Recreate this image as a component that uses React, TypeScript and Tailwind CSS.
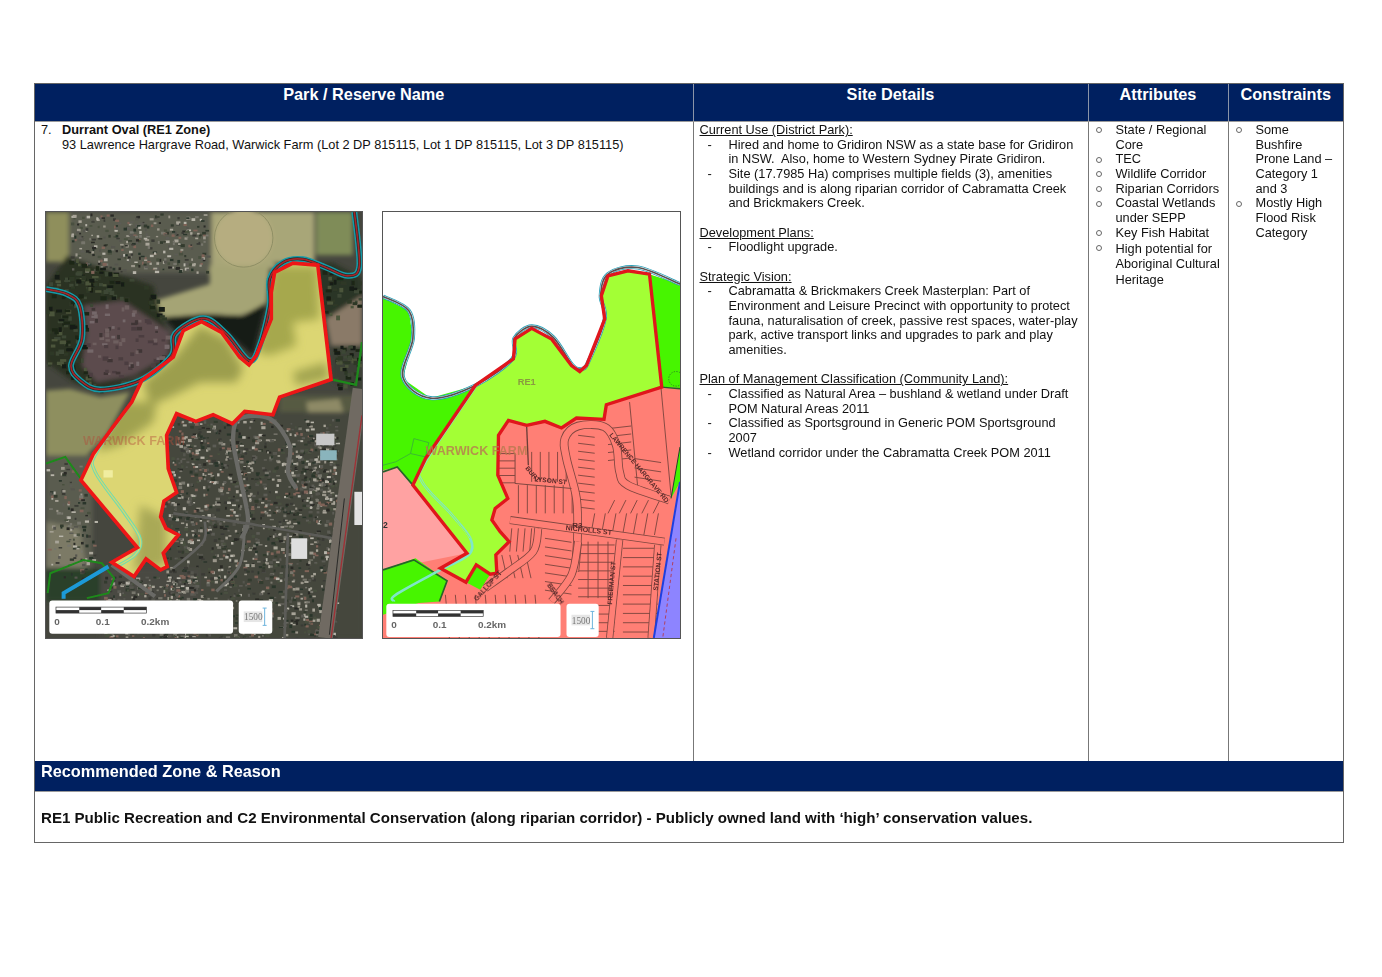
import React from "react";

type P = [number, number];
const NAVY = "bg-[#002060]";

function rng(seed: number) {
  let a = seed;
  return () => {
    a = (a + 0x6d2b79f5) | 0;
    let t = Math.imul(a ^ (a >>> 15), 1 | a);
    t = (t + Math.imul(t ^ (t >>> 7), 61 | t)) ^ t;
    return ((t ^ (t >>> 14)) >>> 0) / 4294967296;
  };
}
const pts = (p: P[]) => p.map((q) => q.join(",")).join(" ");
function smooth(p: P[]) {
  let d = `M${p[0][0]} ${p[0][1]}`;
  for (let i = 0; i < p.length - 1; i++) {
    const a = p[Math.max(i - 1, 0)], b = p[i], c = p[i + 1], e = p[Math.min(i + 2, p.length - 1)];
    d += ` C${b[0] + (c[0] - a[0]) / 6} ${b[1] + (c[1] - a[1]) / 6} ${c[0] - (e[0] - b[0]) / 6} ${c[1] - (e[1] - b[1]) / 6} ${c[0]} ${c[1]}`;
  }
  return d;
}
function inside(q: P, poly: P[]) {
  let r = false;
  for (let i = 0, j = poly.length - 1; i < poly.length; j = i++) {
    const [xi, yi] = poly[i], [xj, yj] = poly[j];
    if (yi > q[1] !== yj > q[1] && q[0] < ((xj - xi) * (q[1] - yi)) / (yj - yi) + xi) r = !r;
  }
  return r;
}

const redA: P[] = [[835,178],[875,522],[720,575],[700,628],[615,618],[578,655],[520,628],[468,648],[410,625],[380,690],[385,790],[410,862],[372,888],[362,935],[378,970],[415,990],[370,1045],[382,1085],[362,1095],[318,1062],[282,1115],[215,1072],[292,1028],[122,825],[160,745],[215,670],[275,590],[305,525],[400,455],[430,375],[485,348],[545,380],[600,455],[628,478],[650,450],[695,340],[695,260],[705,200],[760,172]];
const creekA: P[] = [[17,250],[80,265],[118,300],[125,400],[92,480],[120,525],[180,552],[300,525],[395,450],[405,385],[490,338],[560,385],[628,465],[660,420],[690,300],[690,220],[730,170],[790,160],[860,185],[925,210],[960,180],[945,18]];
const darkBush: P[] = [[80,150],[340,240],[370,350],[400,400],[390,470],[300,510],[180,560],[100,530],[17,470],[17,240]];
const brush: P[] = [[130,300],[250,285],[390,380],[385,450],[280,510],[170,530],[125,480],[140,380]];
const rightBush: P[] = [[700,170],[880,170],[968,215],[968,300],[870,340]];

const HOUSES = ["#3a3b36","#5c5b54","#77766c","#2b2c27","#333a2e","#9a968a","#806458","#49503f","#a8a498","#2a362c","#55554e","#b8b5aa"];
const TREES = ["#1f2719","#2e3826","#3c4734","#161c13","#4c543a"];

function speckle(seed: number, n: number, x: number, y: number, w: number, h: number, skip?: P[], palette = HOUSES, min = 5, max = 13, only?: P[]) {
  const r = rng(seed);
  const out: React.ReactElement[] = [];
  for (let i = 0; i < n; i++) {
    const px = x + r() * w, py = y + r() * h;
    const c = palette[Math.floor(r() * palette.length)];
    const sw = min + r() * (max - min), sh = min * 0.8 + r() * (max - min) * 0.7;
    if (skip && inside([px, py], skip)) continue;
    if (only && !inside([px, py], only)) continue;
    out.push(<rect key={`${seed}-${i}`} x={px} y={py} width={sw} height={sh} fill={c} />);
  }
  return out;
}

function ScaleBar({ x, boxW, box2, box2W, y }: { x: number; boxW: number; box2: number; box2W: number; y: number }) {
  const f = "'Liberation Sans',sans-serif";
  return (
    <g transform={`translate(0 ${y})`}>
      <rect x={x} y="0" width={boxW} height="100" rx="9" fill="#fff" />
      <g transform={`translate(${x + 20} 20)`}>
        <rect width="272" height="18" fill="none" stroke="#333" strokeWidth="2" />
        <rect y="9" width="70" height="9" fill="#333" />
        <rect x="70" width="66" height="9" fill="#333" />
        <rect x="136" y="9" width="68" height="9" fill="#333" />
        <rect x="204" width="68" height="9" fill="#333" />
      </g>
      <text x={x + 15} y="74" fontFamily={f} fontWeight="700" fontSize="30" fill="#666">0</text>
      <text x={x + 140} y="74" fontFamily={f} fontWeight="700" fontSize="30" fill="#666">0.1</text>
      <text x={x + 276} y="74" fontFamily={f} fontWeight="700" fontSize="30" fill="#666">0.2km</text>
      <rect x={box2} y="0" width={box2W} height="100" rx="9" fill="#fff" />
      <rect x={box2 + 15} y="33" width="56" height="32" fill="#e6e6e6" />
      <text x={box2 + 16} y="60" fontFamily="'Liberation Serif',serif" fontSize="28" fill="#777">1500</text>
      <path d={`M${box2 + 72} 23h12M${box2 + 78} 23v52M${box2 + 72} 75h12`} stroke="#6db4dc" strokeWidth="3" fill="none" />
    </g>
  );
}

function AerialMap() {
  const blur = { filter: "url(#blurA)" };
  return (
    <svg viewBox="17 18 951 1282" className="block h-[428px] w-[318px] border border-[#555]" preserveAspectRatio="none">
      <defs>
        <filter id="blurA" x="-5%" y="-5%" width="110%" height="110%"><feGaussianBlur stdDeviation="1.6" /></filter>
        <filter id="blurB" x="-10%" y="-10%" width="120%" height="120%"><feGaussianBlur stdDeviation="14" /></filter>
        <filter id="blurD" x="-5%" y="-5%" width="110%" height="110%"><feGaussianBlur stdDeviation="7" /></filter>
        <clipPath id="redClip"><polygon points={pts(redA)} /></clipPath>
      </defs>
      <rect x="17" y="18" width="951" height="1282" fill="#45463e" />
      <g style={{ filter: "url(#blurD)" }}>
        <rect x="17" y="18" width="70" height="150" fill="#8f8f5c" />
        <rect x="85" y="18" width="430" height="185" fill="#5a5c50" />
        <rect x="515" y="18" width="310" height="170" fill="#a8a678" />
        <circle cx="612" cy="96" r="88" fill="#b6ad80" />
        <rect x="830" y="18" width="110" height="130" fill="#7f8c58" />
        <polygon points="345,285 510,235 510,180 690,180 680,300 600,330 490,325 375,340" fill="#a5a474" />
        <polygon points={pts(darkBush)} fill="#2a3124" />
        <polygon points={pts(brush)} fill="#5c4c4e" />
        <polygon points="370,335 500,325 610,330 680,290 640,450 560,380 480,340 410,380" fill="#141a12" />
        <polygon points={pts(rightBush)} fill="#2c3626" />
        <polygon points="860,340 968,270 968,420 875,420" fill="#8a7a68" />
        <polygon points="17,555 90,550 180,575 270,560 200,690 130,760 17,760" fill="#8e8f5e" />
        <polygon points="875,420 968,420 968,570 880,530" fill="#3a4034" />
        <rect x="720" y="570" width="250" height="140" fill="#565a42" />
        <polygon points="800,590 900,580 930,680 820,700" fill="#8e8a66" />
        <rect x="17" y="750" width="140" height="400" fill="#5a5b50" />
        <polygon points="17,950 120,970 140,1100 17,1120" fill="#7c7a66" />
        <rect x="17" y="1090" width="210" height="100" fill="#2c402c" />
        <rect x="360" y="620" width="610" height="680" fill="#45463e" />
        <rect x="180" y="1090" width="300" height="210" fill="#4a4a42" />
      </g>
      <g style={blur}>
        {speckle(3, 340, 90, 22, 410, 175)}
        <circle cx="612" cy="96" r="88" fill="none" stroke="#8f8f64" strokeWidth="3" />
        {speckle(21, 420, 17, 150, 380, 420, brush, TREES, 8, 20, darkBush)}
        {speckle(23, 110, 130, 290, 260, 240, undefined, ["#4c3e40", "#6e5e5e", "#3f3636", "#75686a"], 8, 18, brush)}
        {speckle(27, 100, 700, 170, 268, 170, undefined, TREES, 8, 20, rightBush)}
        {speckle(29, 50, 875, 420, 90, 130, undefined, TREES, 8, 18)}
        {speckle(7, 140, 17, 770, 150, 350)}
        {speckle(11, 1700, 370, 640, 520, 660, redA)}
        {speckle(13, 330, 190, 1110, 280, 190, redA)}
        {speckle(17, 150, 780, 690, 110, 220)}
        <rect x="830" y="685" width="55" height="35" fill="#c8c8c8" />
        <rect x="842" y="735" width="50" height="30" fill="#8ab4bc" />
        <rect x="755" y="1000" width="48" height="62" fill="#dedede" />
        <rect x="945" y="860" width="23" height="100" fill="#e4e4e4" />
        <path d={smooth([[605,1000],[625,940],[595,790],[580,700],[600,640],[690,640],[750,720],[745,800],[770,850]])} fill="none" stroke="#6a6a66" strokeWidth="13" />
        <path d={smooth([[400,925],[620,955],[880,1000]])} fill="none" stroke="#5c5c58" strokeWidth="8" />
        <path d={smooth([[615,960],[600,1080],[530,1160]])} fill="none" stroke="#6a6a66" strokeWidth="9" />
        <path d={smooth([[495,950],[490,1010],[400,1090]])} fill="none" stroke="#62625e" strokeWidth="8" />
        <path d="M745 985 L735 1300" stroke="#5c5c58" strokeWidth="8" fill="none" />
        <path d="M215 1080 L345 1175" stroke="#6a6a66" strokeWidth="12" fill="none" />
        <path d="M962 550 L858 1300" stroke="#6f6a62" strokeWidth="44" fill="none" />
        <path d="M968 630 L875 1300" stroke="#a03036" strokeWidth="4" fill="none" />
        <path d="M915 880 L870 1290" stroke="#2a2a28" strokeWidth="3" fill="none" />
        <polygon points={pts(redA)} fill="#dcd673" />
        <g clipPath="url(#redClip)">
          <g style={{ filter: "url(#blurB)" }}>
            <polygon points="700,180 835,180 840,340 760,350 770,420 690,450 650,440" fill="#a6a84e" />
            <polygon points="400,460 480,360 560,400 610,490 590,530 480,530 400,570 330,600 310,530" fill="#9c9e4e" />
            <polygon points="230,590 350,590 340,650 240,720 170,740" fill="#a0a250" />
            <polygon points="300,900 380,940 380,1080 280,1100 290,1020" fill="#a9a957" />
            <polygon points="760,500 860,470 870,520 770,540" fill="#a2a450" />
          </g>
          <rect x="190" y="795" width="28" height="22" fill="#f0eda0" />
          <path d={smooth([[275,590],[170,740],[165,800],[250,920],[300,1000],[285,1050],[220,1090]])} fill="none" stroke="#6fdcb0" strokeWidth="10" />
          <path d={smooth([[275,590],[170,740],[165,800],[250,920],[300,1000],[285,1050],[220,1090]])} fill="none" stroke="#d8d670" strokeWidth="4" />
        </g>
        <path d={smooth(creekA)} fill="none" stroke="#159aa8" strokeWidth="18" />
        <path d={smooth(creekA)} fill="none" stroke="#262a26" strokeWidth="9" />
        <path d={smooth(creekA)} fill="none" stroke="#a5282a" strokeWidth="5" />
        <text x="128" y="718" fontFamily="'Liberation Sans',sans-serif" fontWeight="700" fontSize="38" fill="#b34a3a" opacity=".42">WARWICK FARM</text>
        <path d="M17 775 L75 755 L125 825" stroke="#1f8a1a" strokeWidth="6" fill="none" />
        <path d="M875 522 L950 538 L968 410" stroke="#1f8a1a" strokeWidth="7" fill="none" />
        <path d="M22 1165 L30 1105 L130 1065 L185 1075 L222 1120 L205 1165 L140 1180" stroke="#1f8a1a" strokeWidth="6" fill="none" />
        <path d="M70 1182 L70 1165 L205 1085" stroke="#1f9ad8" strokeWidth="12" fill="none" />
        <polygon points={pts(redA)} fill="none" stroke="#ee1418" strokeWidth="11" strokeLinejoin="miter" />
      </g>
      <g style={blur}><ScaleBar x={27} boxW={553} box2={597} box2W={101} y={1187} /></g>
    </svg>
  );
}

const redB: P[] = [[825,205],[862,545],[695,598],[688,642],[605,638],[560,668],[510,648],[455,660],[400,645],[370,690],[368,810],[398,880],[360,910],[350,945],[375,980],[402,1010],[362,1050],[365,1105],[345,1108],[303,1080],[272,1132],[195,1090],[275,1045],[112,840],[150,760],[300,540],[415,460],[420,400],[470,368],[530,400],[590,480],[615,498],[635,480],[690,340],[680,270],[700,210],[760,195]];
const creekB: P[] = [[22,272],[100,315],[112,400],[82,515],[165,578],[300,540],[412,460],[418,398],[470,362],[535,395],[592,478],[620,490],[640,470],[690,340],[678,270],[700,205],[790,185],[917,235]];

function parcels() {
  const out: React.ReactElement[] = [];
  const row = (k: string, x1: number, x2: number, y1: number, y2: number, step: number, dy = 0) => {
    for (let y = y1, i = 0; y <= y2; y += step, i++)
      out.push(<line key={`${k}${i}`} x1={x1} y1={y} x2={x2} y2={y + dy} />);
  };
  const col = (k: string, y1: number, y2: number, x1: number, x2: number, step: number, dx = 0) => {
    for (let x = x1, i = 0; x <= x2; x += step, i++)
      out.push(<line key={`${k}${i}`} x1={x} y1={y1} x2={x + dx} y2={y2} />);
  };
  row("a", 370, 420, 745, 835, 22);
  col("b", 840, 925, 430, 600, 27);
  row("c", 610, 660, 690, 920, 24, 6);
  col("d", 740, 830, 470, 590, 26);
  col("e", 925, 990, 660, 860, 32, -12);
  col("f", 885, 925, 720, 860, 34, -20);
  row("g", 610, 720, 1020, 1300, 26);
  row("h", 745, 850, 1030, 1300, 28);
  col("i", 1010, 1180, 640, 700, 30);
  row("j", 510, 590, 1000, 1170, 26, 12);
  col("k", 970, 1040, 410, 490, 20, -6);
  col("l", 1170, 1300, 210, 500, 30, 12);
  row("m", 700, 770, 670, 780, 24, -8);
  row("n", 780, 860, 760, 840, 28, 12);
  col("p", 1050, 1120, 380, 470, 24, 16);
  out.push(<line key="o1" x1="765" y1="590" x2="790" y2="850" />, <line key="o2" x1="860" y1="550" x2="890" y2="870" />);
  return out;
}

function Road({ d, w }: { d: string; w: number }) {
  return (
    <>
      <path d={d} stroke="#7f4640" strokeWidth={w} />
      <path d={d} stroke="#ff7f74" strokeWidth={w - 5} />
    </>
  );
}

function ZoningMap() {
  const f = "'Liberation Sans',sans-serif";
  return (
    <svg viewBox="22 18 895 1282" className="block h-[428px] w-[299px] border border-[#555]" preserveAspectRatio="none">
      <defs><filter id="blurC" x="-5%" y="-5%" width="110%" height="110%"><feGaussianBlur stdDeviation="1.3" /></filter></defs>
      <g style={{ filter: "url(#blurC)" }}>
        <rect x="22" y="18" width="895" height="1282" fill="#ff7f74" />
        <g stroke="#7f4640" strokeWidth="2.8" fill="none">{parcels()}</g>
        <g fill="none">
          <Road d={smooth([[600,1100],[608,1000],[605,880],[575,760],[570,700],[610,662],[690,665],[725,720],[735,800],[760,840],[885,885]])} w={26} />
          <Road d="M405 945 L870 1010" w={24} />
          <Road d={smooth([[490,970],[475,1040],[400,1100],[330,1150]])} w={24} />
          <Road d={smooth([[610,1010],[590,1110],[530,1190]])} w={24} />
          <Road d="M735 1005 L705 1300" w={22} />
          <Road d="M850 1020 L830 1300" w={22} />
          <path d="M420 745 L420 835 L590 850" stroke="#7f4640" strokeWidth="3" />
          <path d="M455 665 L460 780" stroke="#6a3d38" strokeWidth="4" />
        </g>
        <polygon points="22,270 110,300 120,500 300,530 150,800 112,860 60,790 22,800" fill="#46f500" />
        <polygon points="825,205 917,235 917,548 862,545" fill="#46f500" />
        <polygon points={pts(redB)} fill="#a3ff34" />
        <polygon points="22,795 65,785 275,1045 22,1095" fill="#ffa2a2" />
        <polygon points="22,1095 120,1060 215,1128 192,1190 130,1195 22,1230" fill="#46f500" />
        <path d="M22 1095 L115 1065 L215 1128 L192 1190" stroke="#27632a" strokeWidth="5" fill="none" />
        <polygon points="303,1080 345,1108 315,1155 272,1132" fill="#46f500" />
        <polygon points="22,18 917,18 917,235 825,205 760,195 700,210 680,270 690,340 635,480 615,498 590,480 530,400 470,368 420,400 415,460 300,540 165,578 82,520 112,400 100,315 22,275" fill="#fff" />
        <polygon points="917,830 838,1300 917,1300" fill="#8d84ff" />
        <polygon points="917,725 890,880 917,830" fill="#46f500" />
        <path d="M917 830 L838 1300" stroke="#1f3fe0" strokeWidth="6" />
        <path d="M905 1000 L865 1300" stroke="#b04060" strokeWidth="3" strokeDasharray="10 8" />
        <path d="M917 725 L890 880" stroke="#26402a" strokeWidth="3" />
        <path d="M22 800 L65 785 L112 840" stroke="#27632a" strokeWidth="5" fill="none" />
        <path d="M862 545 L917 550" stroke="#27632a" strokeWidth="4" />
        <circle cx="905" cy="520" r="22" fill="none" stroke="#2a7a2a" strokeWidth="2.5" strokeDasharray="4 4" />
        <polygon points="115,700 160,712 150,755 105,745" fill="none" stroke="#3aae3a" strokeWidth="2.5" />
        <path d="M105 745 L60 770 L22 780" stroke="#3aae3a" strokeWidth="2.5" fill="none" />
        <path d={smooth([[300,545],[150,770],[140,830],[230,930],[285,1000],[280,1050],[195,1095],[60,1170],[55,1190]])} fill="none" stroke="#7fe6c8" strokeWidth="8" />
        <path d={smooth([[300,545],[150,770],[140,830],[230,930],[285,1000]])} fill="none" stroke="#a3ff34" strokeWidth="3" />
        <path d={smooth(creekB)} fill="none" stroke="#2aa0b8" strokeWidth="12" />
        <path d={smooth(creekB)} fill="none" stroke="#fff" strokeWidth="7" />
        <path d={smooth(creekB)} fill="none" stroke="#5a5050" strokeWidth="5" />
        <polygon points={pts(redB)} fill="none" stroke="#e0141c" strokeWidth="10" />
        <text x="428" y="538" fontFamily={f} fontWeight="700" fontSize="28" fill="#8a9a40">RE1</text>
        <text x="150" y="750" fontFamily={f} fontWeight="700" fontSize="38" fill="#b77a50" opacity=".8">WARWICK FARM</text>
        <text x="22" y="968" fontFamily={f} fontWeight="700" fontSize="26" fill="#333">2</text>
        <text x="592" y="970" fontFamily={f} fontWeight="700" fontSize="24" fill="#5a2a2a">R3</text>
        <text x="572" y="975" fontFamily={f} fontSize="21" fontWeight="700" fill="#5a2a2a" transform="rotate(6 572 975)">NICHOLLS ST</text>
        <text x="450" y="790" fontFamily={f} fontSize="20" fontWeight="700" fill="#5a2a2a" transform="rotate(50 450 790)">BURT</text>
        <text x="478" y="828" fontFamily={f} fontSize="20" fontWeight="700" fill="#5a2a2a" transform="rotate(6 478 828)">LYSON ST</text>
        <text x="703" y="690" fontFamily={f} fontSize="20" fontWeight="700" fill="#5a2a2a" transform="rotate(50 703 690)">LAWRENCE HARGRAVE RD</text>
        <text x="850" y="1158" fontFamily={f} fontSize="20" fontWeight="700" fill="#5a2a2a" transform="rotate(-84 850 1158)">STATION ST</text>
        <text x="712" y="1200" fontFamily={f} fontSize="20" fontWeight="700" fill="#5a2a2a" transform="rotate(-85 712 1200)">FREEMAN ST</text>
        <text x="305" y="1190" fontFamily={f} fontSize="20" fontWeight="700" fill="#5a2a2a" transform="rotate(-48 305 1190)">GALLOP ST</text>
        <text x="515" y="1142" fontFamily={f} fontSize="20" fontWeight="700" fill="#5a2a2a" transform="rotate(55 515 1142)">BEACH</text>
      </g>
      <g style={{ filter: "url(#blurC)" }}><ScaleBar x={32} boxW={525} box2={575} box2W={97} y={1197} /></g>
    </svg>
  );
}

function Dash({ children }: { children: React.ReactNode }) {
  return (
    <div className="flex">
      <span className="w-[29px] shrink-0 pl-[8px]">-</span>
      <div>{children}</div>
    </div>
  );
}
function Circle({ children }: { children: React.ReactNode }) {
  return (
    <div className="flex">
      <span className="flex h-[14.67px] w-[21px] shrink-0 items-center pl-[1px]">
        <span className="block h-[6px] w-[6px] rounded-full border border-[#666]" />
      </span>
      <div>{children}</div>
    </div>
  );
}
const Heading = ({ children }: { children: React.ReactNode }) => <div className="underline">{children}</div>;
const Gap = () => <div className="h-[14.67px]" />;
const Head = ({ children, border = true }: { children: React.ReactNode; border?: boolean }) => (
  <div className={`h-[37px] text-center text-[16.3px] leading-[20px] font-bold text-white ${border ? "border-r border-[#8a94a8]" : ""}`}>{children}</div>
);

export default function App() {
  return (
    <div className="h-[977px] w-[1382px] overflow-hidden bg-white pt-[83px] pl-[34px] font-['Liberation_Sans',Arial,sans-serif] text-[12.78px] leading-[14.67px] text-[#111]">
      <div className="w-[1310px] border border-[#666]">
        <div className={`grid grid-cols-[658.5px_395px_140px_1fr] border-b border-[#9a9a9a] ${NAVY}`}>
          <Head>Park / Reserve Name</Head>
          <Head>Site Details</Head>
          <Head>Attributes</Head>
          <Head border={false}>Constraints</Head>
        </div>
        <div className="grid h-[639px] grid-cols-[658.5px_395px_140px_1fr]">
          <div className="border-r border-[#777] pt-[1px]">
            <div className="flex pl-[6px]">
              <span className="w-[21px] shrink-0">7.</span>
              <div>
                <div className="font-bold">Durrant Oval (RE1 Zone)</div>
                <div>93 Lawrence Hargrave Road, Warwick Farm (Lot 2 DP 815115, Lot 1 DP 815115, Lot 3 DP 815115)</div>
              </div>
            </div>
            <div className="mt-[59px] flex gap-[19px] pl-[10px]">
              <AerialMap />
              <ZoningMap />
            </div>
          </div>
          <div className="border-r border-[#777] pt-[1px] pl-[6px]">
            <Heading>Current Use (District Park):</Heading>
            <Dash>Hired and home to Gridiron NSW as a state base for Gridiron<br />in NSW.&nbsp; Also, home to Western Sydney Pirate Gridiron.</Dash>
            <Dash>Site (17.7985 Ha) comprises multiple fields (3), amenities<br />buildings and is along riparian corridor of Cabramatta Creek<br />and Brickmakers Creek.</Dash>
            <Gap />
            <Heading>Development Plans:</Heading>
            <Dash>Floodlight upgrade.</Dash>
            <Gap />
            <Heading>Strategic Vision:</Heading>
            <Dash>Cabramatta &amp; Brickmakers Creek Masterplan: Part of<br />Environment and Leisure Precinct with opportunity to protect<br />fauna, naturalisation of creek, passive rest spaces, water-play<br />park, active transport links and upgrades to park and play<br />amenities.</Dash>
            <Gap />
            <Heading>Plan of Management Classification (Community Land):</Heading>
            <Dash>Classified as Natural Area – bushland &amp; wetland under Draft<br />POM Natural Areas 2011</Dash>
            <Dash>Classified as Sportsground in Generic POM Sportsground<br />2007</Dash>
            <Dash>Wetland corridor under the Cabramatta Creek POM 2011</Dash>
          </div>
          <div className="border-r border-[#777] pt-[1px] pl-[6px]">
            <Circle>State / Regional<br />Core</Circle>
            <Circle>TEC</Circle>
            <Circle>Wildlife Corridor</Circle>
            <Circle>Riparian Corridors</Circle>
            <Circle>Coastal Wetlands<br />under SEPP</Circle>
            <Circle>Key Fish Habitat</Circle>
            <div className="pt-[0.5px]"><Circle><div className="leading-[15.5px]">High potential for<br />Aboriginal Cultural<br />Heritage</div></Circle></div>
          </div>
          <div className="pt-[1px] pl-[6px]">
            <Circle>Some<br />Bushfire<br />Prone Land –<br />Category 1<br />and 3</Circle>
            <Circle>Mostly High<br />Flood Risk<br />Category</Circle>
          </div>
        </div>
        <div className={`h-[31px] border-b border-[#9a9a9a] pl-[6px] text-[16.3px] leading-[20px] font-bold text-white ${NAVY}`}>Recommended Zone &amp; Reason</div>
        <div className="h-[50px] pt-[17px] pl-[6px] text-[15.1px] leading-[18px] font-bold">
          RE1 Public Recreation and C2 Environmental Conservation (along riparian corridor) - Publicly owned land with ‘high’ conservation values.
        </div>
      </div>
    </div>
  );
}
